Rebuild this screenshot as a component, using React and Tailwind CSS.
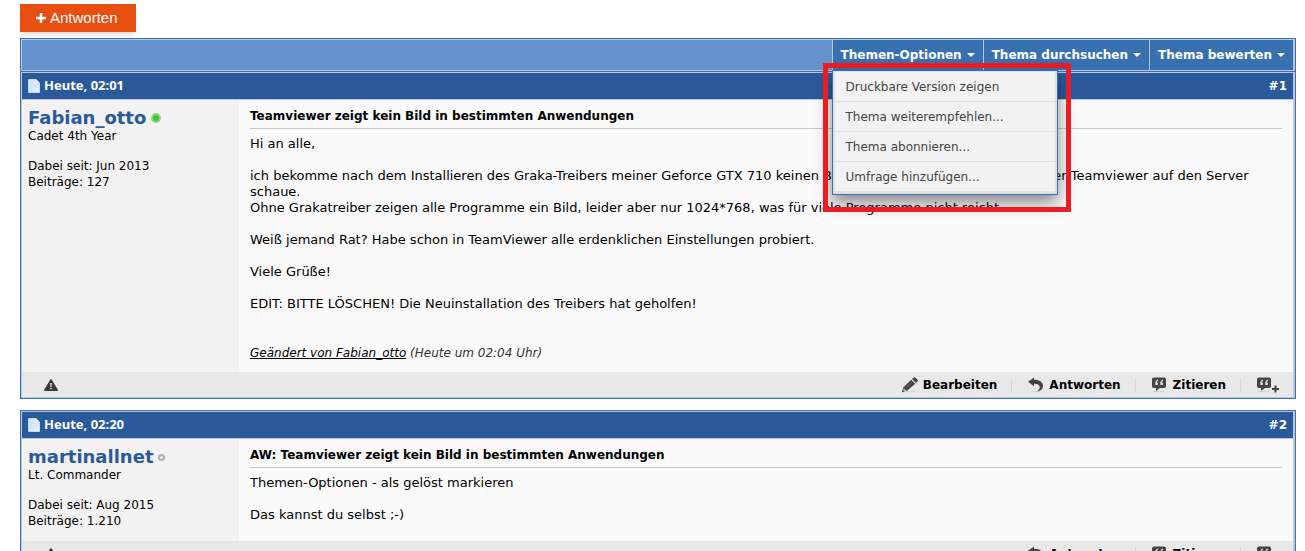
const POSTS = [
  {
    id: 1,
    date: "Heute, 02:01",
    author: "Fabian_otto",
    online: true,
    rank: "Cadet 4th Year",
    joined: "Jun 2013",
    count: "127",
    title: "Teamviewer zeigt kein Bild in bestimmten Anwendungen",
    own: true,
    lines: [
      "Hi an alle,",
      "",
      "ich bekomme nach dem Installieren des Graka-Treibers meiner Geforce GTX 710 keinen Bildschirminhalt mehr, wenn ich über Teamviewer auf den Server",
      "schaue.",
      "Ohne Grakatreiber zeigen alle Programme ein Bild, leider aber nur 1024*768, was für viele Programme nicht reicht.",
      "",
      "Weiß jemand Rat? Habe schon in TeamViewer alle erdenklichen Einstellungen probiert.",
      "",
      "Viele Grüße!",
      "",
      "EDIT: BITTE LÖSCHEN! Die Neuinstallation des Treibers hat geholfen!",
    ],
    edited: "Heute um 02:04 Uhr",
  },
  {
    id: 2,
    date: "Heute, 02:20",
    author: "martinallnet",
    online: false,
    rank: "Lt. Commander",
    joined: "Aug 2015",
    count: "1.210",
    title: "AW: Teamviewer zeigt kein Bild in bestimmten Anwendungen",
    own: false,
    lines: ["Themen-Optionen - als gelöst markieren", "", "Das kannst du selbst ;-)"],
  },
];

const OPTIONS = [
  "Druckbare Version zeigen",
  "Thema weiterempfehlen...",
  "Thema abonnieren...",
  "Umfrage hinzufügen...",
];

const Caret = () => (
  <svg className="w-2 h-1" viewBox="0 0 8 4" aria-hidden="true">
    <path d="M0 0h8L4 4z" fill="#fff" />
  </svg>
);

const PageIcon = () => (
  <svg className="w-3 h-3.5" viewBox="0 0 12 14" aria-hidden="true">
    <path d="M1 0h7l4 4v9q0 1-1 1H1q-1 0-1-1V1q0-1 1-1z" fill="#c3dbf8" />
    <path d="M1 1h6.500L11 4.500V13H1z" fill="#d3e5fb" />
    <path d="M7.500 0L12 4.500H7.500z" fill="#f0f7ff" />
    <path d="M1 13h10V7z" fill="#e0edfd" />
  </svg>
);

const WarnIcon = () => (
  <svg className="w-3.5 h-3" viewBox="0 0 14 12" aria-hidden="true">
    <path d="M7 .8L13.200 11.200H.8z" fill="#3a3a3a" stroke="#3a3a3a" strokeWidth="1.500" strokeLinejoin="round" />
    <path d="M6.200 4h1.600l-.3 4h-1z M6.300 8.800h1.400v1.400H6.300z" fill="#e8e8e8" />
  </svg>
);

const PencilIcon = () => (
  <svg className="w-4 h-4" viewBox="0 0 16 16" aria-hidden="true">
    <path d="M4 14.500h9" stroke="#d2d2d2" />
    <path d="M0 15.200L1.500 10.300 9.200 2.800l4 4-8.200 7z" fill="#444" />
    <path d="M10 2.100L11.800.6q.9-.7 1.700.1l2 2q.7.9 0 1.600L14 6z" fill="#444" />
    <path d="M1.900 11.300l2.400 2.400-2.600.8-.6-.6z" fill="#bbb" />
    <path d="M0 15.200l.6-1.900 1.200 1.300z" fill="#333" />
    <path d="M4 10.800l6.300-6" stroke="#777" strokeWidth=".7" />
  </svg>
);

const ReplyIcon = () => (
  <svg className="w-4 h-4" viewBox="0 0 16 16" aria-hidden="true">
    <path d="M3 14.500h9" stroke="#d2d2d2" />
    <path d="M0 4.800L6 0.500v2.300C12 2.800 15 5.500 15 9c0 3-2 5-6 5.500C11.300 12.800 12 11.500 11.700 9.800 11.300 7.500 9.500 6.700 6 6.700v2.600z" fill="#444" />
  </svg>
);

const Bubble = () => (
  <>
    <path d="M1 14.500h11" stroke="#d2d2d2" />
    <path d="M2 .5h10q2 0 2 2v6.500q0 2-2 2H8L4 14V11H2q-2 0-2-2V2.500q0-2 2-2z" fill="#444" />
    <path d="M6 3.200Q3.900 3.800 3.900 6M11 3.200Q8.900 3.800 8.900 6" fill="none" stroke="#e8e8e8" strokeWidth="1.200" />
    <path d="M3.400 5.500h2.400V8H3.400zM8.400 5.500h2.400V8H8.400z" fill="#e8e8e8" />
  </>
);

const QuoteIcon = () => (
  <svg className="w-4 h-4" viewBox="0 0 16 16" aria-hidden="true">
    <Bubble />
  </svg>
);

const MultiQuoteIcon = () => (
  <svg className="w-[22px] h-4" viewBox="0 0 22 16" aria-hidden="true">
    <Bubble />
    <path d="M15 12h7M18.500 8.500v7" stroke="#444" strokeWidth="2" />
  </svg>
);

const ToolbarItem = ({ label, children }) => (
  <div className="relative border-l border-[#c0c4e4] bg-[#3771b0]">
    <button type="button" className="flex h-full items-center gap-[5px] px-2 whitespace-nowrap">
      {label}
      <Caret />
    </button>
    {children}
  </div>
);

const OptionsMenu = () => (
  <>
    <ul className="absolute top-[30px] -left-px z-10 w-[226px] border border-[#3771b0] bg-[#e0e0e0] px-0.5 pt-px pb-[3px] text-xs font-normal text-[#444] shadow-[0_8px_16px_rgba(0,0,0,0.45)]">
      {OPTIONS.map((option) => (
        <li key={option} className="mb-px bg-[#f2f2f2] last:mb-0">
          <a href="#" className="block px-[11px] pt-[7px] pb-[5px] leading-[17px]">{option}</a>
        </li>
      ))}
    </ul>
    {/* highlight frame around the open menu */}
    <div className="pointer-events-none absolute top-[23px] -left-2.5 z-20 h-[149px] w-[248px] border-5 border-[#ed1c24]" />
  </>
);

const Action = ({ icon, label }) => (
  <a href="#" aria-label={label || "Mehrfach zitieren"} className="flex items-center gap-[5px]">
    {icon}
    {label}
  </a>
);

const Divider = () => <span className="mr-4 ml-3.5 h-3.5 w-px bg-[#d8d8d8]" />;

const Post = ({ post }) => (
  <article>
    <header className="flex h-[27px] items-center justify-between border-b border-[#c0c4e4] bg-[#2b5a9b] px-1.5 text-xs font-bold text-white">
      <span className="flex items-center gap-1 font-['Noto_Sans',sans-serif] text-[13px]">
        <PageIcon />
        {post.date}
      </span>
      <a href="#">#{post.id}</a>
    </header>

    <div className="flex">
      <aside className="w-[217px] shrink-0 border-r border-[#ededed] bg-[#f2f2f2] px-1.5 pt-2 text-xs leading-4">
        <div className="flex items-center gap-[5px]">
          <a href="#" className="text-lg leading-5 font-bold text-[#2b5a9b]">{post.author}</a>
          {post.online ? (
            <span className="size-2.5 rounded-full border-2 border-[#8fd67f] bg-[#3cc43c]" />
          ) : (
            <span className="size-[7px] rounded-full border-2 border-[#b0b0b0]" />
          )}
        </div>
        <p>{post.rank}</p>
        <p className="mt-3.5">Dabei seit: {post.joined}</p>
        <p>Beiträge: {post.count}</p>
      </aside>

      <div className="min-w-0 flex-1 bg-[#fafafa] pt-2 pr-[11px] pb-[18px] pl-[11px] text-[13px] leading-4">
        <h2 className="border-b border-[#c8c8c8] pb-1 text-xs leading-4 font-bold">{post.title}</h2>
        <div className="mt-[7px]">
          {post.lines.map((line, i) => (
            <p key={i} className="min-h-4 whitespace-nowrap">{line}</p>
          ))}
        </div>
        {post.edited && (
          <p className="mt-[33px] -mb-[7px] text-xs leading-4 text-[#333] italic">
            <a href="#" className="text-black underline">Geändert von {post.author}</a> ({post.edited})
          </p>
        )}
      </div>
    </div>

    <footer className="flex h-[25px] items-center justify-between bg-[#e8e8e8] pr-3.5 pl-[22px] text-xs font-bold">
      <a href="#" aria-label="Beitrag melden"><WarnIcon /></a>
      <div className="flex items-center">
        {post.own && (
          <>
            <Action icon={<PencilIcon />} label="Bearbeiten" />
            <Divider />
          </>
        )}
        <Action icon={<ReplyIcon />} label="Antworten" />
        <Divider />
        <Action icon={<QuoteIcon />} label="Zitieren" />
        <Divider />
        <Action icon={<MultiQuoteIcon />} />
      </div>
    </footer>
  </article>
);

const Frame = ({ className, children }) => (
  <section className={`border border-[#3771b0] ${className}`}>
    <div className="border border-r-2 border-[#c0c4e4]">{children}</div>
  </section>
);

export default function App() {
  return (
    <main className="h-screen overflow-hidden bg-white pt-1 pr-[9px] pl-5 font-['DejaVu_Sans',Verdana,sans-serif] text-black">
      <button type="button" className="flex h-7 items-center gap-1 bg-[#e84e0f] pr-[18px] pl-4 font-['Liberation_Sans',Arial,sans-serif] text-[15px] text-white shadow-md">
        <svg className="size-2.5" viewBox="0 0 10 10" aria-hidden="true">
          <path d="M5 0v10M0 5h10" stroke="#fff" strokeWidth="2.500" />
        </svg>
        Antworten
      </button>

      <Frame className="mt-1.5 border-b-0">
        <nav className="flex h-[30px] justify-end bg-[#6490cb] text-xs font-bold text-white">
          <ToolbarItem label="Themen-Optionen">
            <OptionsMenu />
          </ToolbarItem>
          <ToolbarItem label="Thema durchsuchen" />
          <ToolbarItem label="Thema bewerten" />
        </nav>
      </Frame>

      {POSTS.map((post) => (
        <Frame key={post.id} className="mb-[11px]">
          <Post post={post} />
        </Frame>
      ))}
    </main>
  );
}
